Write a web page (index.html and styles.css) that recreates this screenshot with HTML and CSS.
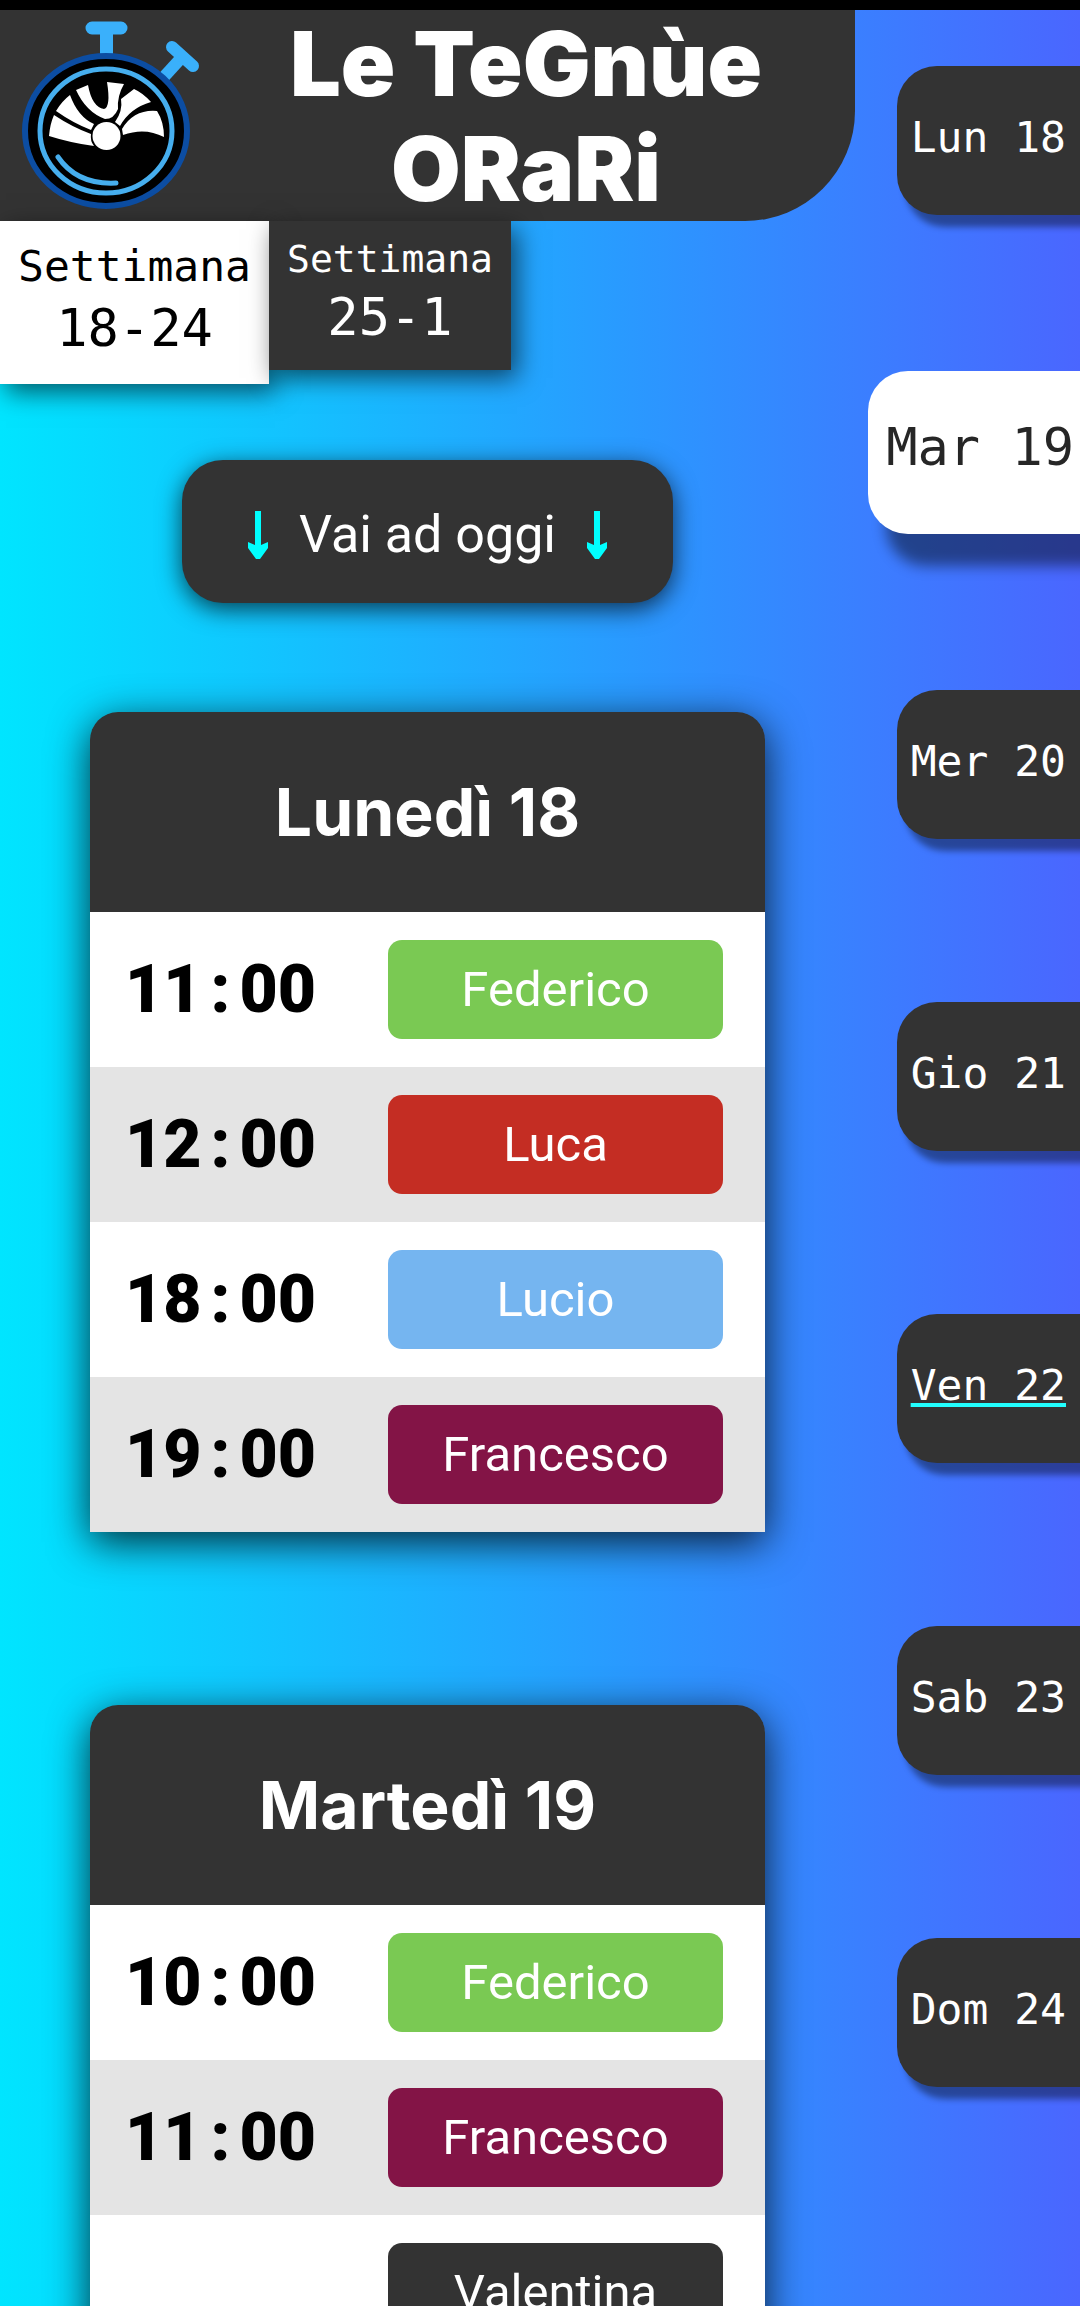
FILE: index.html
```html
<!DOCTYPE html>
<html lang="it">
<head>
<meta charset="utf-8">
<meta name="viewport" content="width=device-width, initial-scale=1">
<title>Le Tegnùe Orari</title>
<link rel="stylesheet" href="styles.css">
</head>
<body>
<div class="app">
  <div class="content">
    <header class="header">
      <svg class="logo" viewBox="0 0 197 211" aria-hidden="true">
        <path d="M92 18H121M106.500 20V50" stroke="#3ab0fb" stroke-width="13" stroke-linecap="round"/>
        <path d="M183 46L162 69" stroke="#3ab0fb" stroke-width="12"/>
        <path d="M172 37L193 56" stroke="#3ab0fb" stroke-width="12" stroke-linecap="round"/>
        <ellipse cx="106" cy="121" rx="81" ry="75" fill="#000" stroke="#0c4da2" stroke-width="6"/>
        <ellipse cx="106" cy="121" rx="66" ry="62" fill="none" stroke="#46aeee" stroke-width="5"/>
        <path d="M58 147Q77 175 116 173" fill="none" stroke="#46aeee" stroke-width="5" stroke-linecap="round"/>
        <g fill="#fff">
          <path d="M54 105Q72 117 91 124Q90 131 94 136Q71 133 49 126Q50 114 54 105Z"/>
          <path d="M70 85Q78 107 94 114L91 120Q73 113 56 101Q62 91 70 85Z"/>
          <path d="M76 80L88 75Q92 97 104 99Q111 97 107 72L124 74Q117 86 118 99Q114 109 105 109Q86 102 76 80Z"/>
          <path d="M134 79Q143 83 151 92Q130 98 120 116L115 112Q123 101 121 89Z"/>
          <path d="M157 101Q164 112 164 127Q145 117 123 125L122 119Q134 99 157 101Z"/>
          <circle cx="106.500" cy="126" r="14"/>
        </g>
      </svg>
      <h1 class="title">Le TeGnùe<br>ORaRi</h1>
    </header>

    <nav class="weeks" aria-label="Settimane">
      <a class="week week-active" href="#settimana-18" aria-current="true">Settimana <span class="week-range">18-24</span></a>
      <a class="week" href="#settimana-25">Settimana <span class="week-range">25-1</span></a>
    </nav>

    <main class="schedule">
      <button class="today" type="button">
        <svg class="arrow" viewBox="0 0 22 48" aria-hidden="true"><path d="M8 0H14V34L21 31V37L13 48H9L1 37V31L8 34Z"/></svg>
        <span>Vai ad oggi</span>
        <svg class="arrow" viewBox="0 0 22 48" aria-hidden="true"><path d="M8 0H14V34L21 31V37L13 48H9L1 37V31L8 34Z"/></svg>
      </button>

      <section class="card" id="lun">
        <h2 class="card-title">Lunedì 18</h2>
        <ul class="slots">
          <li class="slot"><time class="time"><span>11</span><span class="colon">:</span><span>00</span></time><span class="person green">Federico</span></li>
          <li class="slot"><time class="time"><span>12</span><span class="colon">:</span><span>00</span></time><span class="person red">Luca</span></li>
          <li class="slot"><time class="time"><span>18</span><span class="colon">:</span><span>00</span></time><span class="person sky">Lucio</span></li>
          <li class="slot"><time class="time"><span>19</span><span class="colon">:</span><span>00</span></time><span class="person plum">Francesco</span></li>
        </ul>
      </section>

      <section class="card" id="mar">
        <h2 class="card-title">Martedì 19</h2>
        <ul class="slots">
          <li class="slot"><time class="time"><span>10</span><span class="colon">:</span><span>00</span></time><span class="person green">Federico</span></li>
          <li class="slot"><time class="time"><span>11</span><span class="colon">:</span><span>00</span></time><span class="person plum">Francesco</span></li>
          <li class="slot"><span class="time"></span><span class="person dark">Valentina</span></li>
        </ul>
      </section>
    </main>
  </div>

  <nav class="days" aria-label="Giorni">
    <a class="day" href="#lun">Lun 18</a>
    <a class="day day-active" href="#mar" aria-current="true">Mar 19</a>
    <a class="day" href="#mer">Mer 20</a>
    <a class="day" href="#gio">Gio 21</a>
    <a class="day day-today" href="#ven">Ven 22</a>
    <a class="day" href="#sab">Sab 23</a>
    <a class="day" href="#dom">Dom 24</a>
  </nav>
</div>
</body>
</html>
```
FILE: styles.css
```css
:root {
  --dark: #333;
  --mono: "DejaVu Sans Mono", monospace;
  --sans: Roboto, sans-serif;
}

* { box-sizing: border-box; }

body {
  margin: 0;
  font-family: var(--sans);
  color: #fff;
}

.app {
  height: 100vh;
  display: flex;
  justify-content: space-between;
  border-top: 10px solid #000;
  background: linear-gradient(90deg, #00e5ff, #2b97ff 60%, #4a66ff);
  overflow: hidden;
}

.content {
  width: calc(100% - 225px);
  display: flex;
  flex-direction: column;
}

.header {
  display: flex;
  align-items: center;
  background: var(--dark);
  border-radius: 0 0 110px 0;
}

.logo {
  width: 197px;
  height: 211px;
  flex: none;
  overflow: visible;
  fill: none;
}

.title {
  flex: 1;
  margin: 0;
  font: 900 90px/105px Inter, sans-serif;
  text-align: center;
}

.weeks {
  display: flex;
  align-items: flex-start;
}

.week {
  display: flex;
  flex-direction: column;
  align-items: center;
  padding: 14px 18px 18px;
  background: var(--dark);
  color: #fff;
  font: 38px/48px var(--mono);
  text-decoration: none;
  box-shadow: 6px 8px 24px rgba(0, 0, 0, .6);
}

.week-range {
  font-size: 52px;
  line-height: 69px;
}

.week-active {
  padding: 18px 18px 21px;
  background: #fff;
  color: #000;
  font-size: 43px;
  line-height: 55px;
}

.schedule {
  display: flex;
  flex-direction: column;
  align-items: center;
  padding: 76px 90px 0;
}

.today {
  display: flex;
  align-items: center;
  gap: 30px;
  height: 143px;
  padding: 6px 65px 0;
  border: 0;
  border-radius: 41px;
  background: var(--dark);
  color: #fff;
  font: 52px/60px var(--sans);
  box-shadow: 0 6px 24px rgba(0, 0, 0, .7);
}

.arrow {
  width: 22px;
  height: 48px;
  fill: #0ff;
}

.card {
  width: 100%;
  margin-top: 109px;
  border-radius: 28px 28px 0 0;
  box-shadow: 0 10px 40px rgba(0, 0, 0, .8);
}

.card + .card { margin-top: 173px; }

.card-title {
  margin: 0;
  padding: 60px 0;
  border-radius: 28px 28px 0 0;
  background: var(--dark);
  font: 700 66px/80px Inter, sans-serif;
  text-align: center;
}

.slots {
  margin: 0;
  padding: 0;
  list-style: none;
}

.slot {
  display: flex;
  align-items: center;
  justify-content: space-between;
  padding: 28px 42px 28px 35px;
  background: #fff;
}

.slot:nth-child(even) { background: #e4e4e4; }

.time {
  display: flex;
  color: #000;
  font: 900 66px/72px var(--sans);
}

.colon {
  width: 38px;
  text-align: center;
}

.person {
  width: 335px;
  border-radius: 14px;
  font-size: 49px;
  line-height: 99px;
  text-align: center;
}

.green { background: #7ac953; }
.red { background: #c42d23; }
.sky { background: #75b5f0; }
.plum { background: #831446; }
.dark { background: var(--dark); }

.days {
  display: flex;
  flex-direction: column;
  align-items: flex-end;
  gap: 163px;
  padding-top: 56px;
}

.day {
  flex: none;
  padding: 47px 14px 53px;
  border-radius: 40px 0 0 40px;
  background: var(--dark);
  color: #fff;
  font: 43px/49px var(--mono);
  text-decoration: none;
  white-space: pre;
  box-shadow: 8px 12px 6px rgba(0, 0, 0, .4);
}

.day-active {
  margin: -7px 0;
  padding: 45px 6px 55px 18px;
  background: #fff;
  color: #262626;
  font-size: 52px;
  line-height: 63px;
  box-shadow: 18px 32px 14px rgba(0, 0, 0, .45);
}

.day-today {
  text-decoration: underline #2ff 4px;
  text-underline-offset: 3px;
  text-decoration-skip-ink: none;
}
```
